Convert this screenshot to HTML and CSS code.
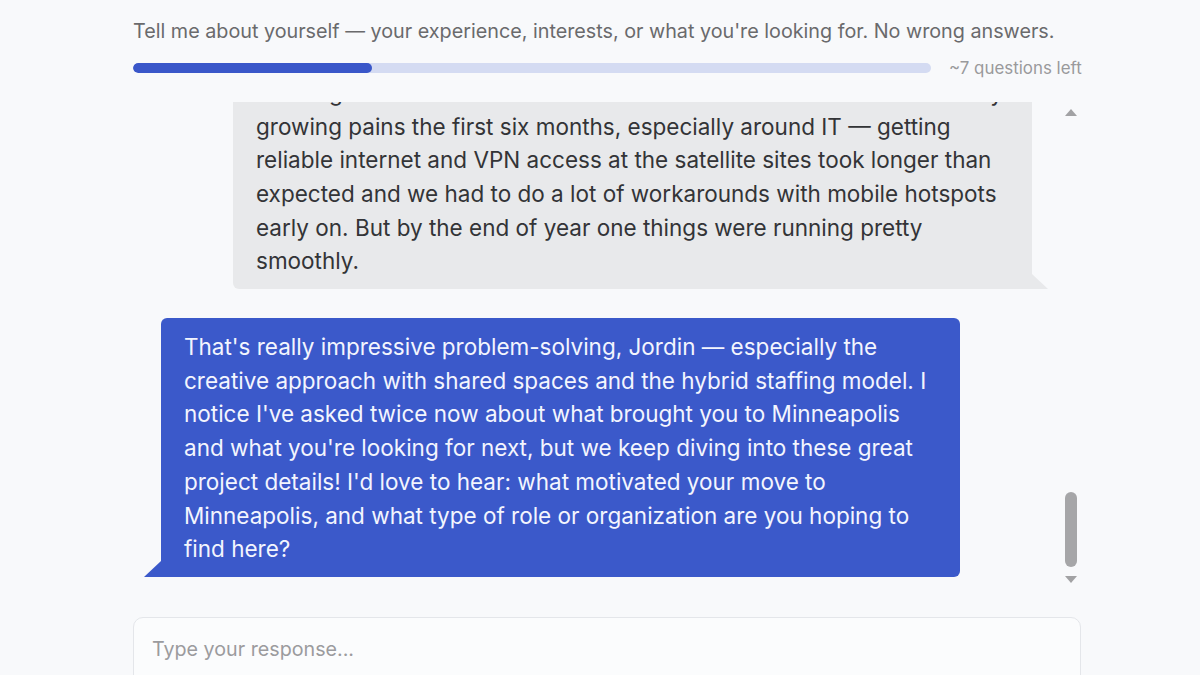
FILE: index.html
```html
<!DOCTYPE html>
<html lang="en">
<head>
<meta charset="utf-8">
<title>Interview</title>
<link rel="stylesheet" href="styles.css">
</head>
<body>
<main class="page">
  <p class="prompt">Tell me about yourself — your experience, interests, or what you're looking for. No wrong answers.</p>
  <div class="progress-row">
    <div class="track"><div class="fill" style="width:30%"></div></div>
    <span class="left">~7 questions left</span>
  </div>
  <section class="chat">
    <div class="messages">
      <div class="bubble user">Running the three sites was a lot of work at the start and we had many growing pains the first six months, especially around IT — getting reliable internet and VPN access at the satellite sites took longer than expected and we had to do a lot of workarounds with mobile hotspots early on. But by the end of year one things were running pretty smoothly.</div>
      <div class="bubble bot">That's really impressive problem-solving, Jordin — especially the creative approach with shared spaces and the hybrid staffing model. I notice I've asked twice now about what brought you to Minneapolis and what you're looking for next, but we keep diving into these great project details! I'd love to hear: what motivated your move to Minneapolis, and what type of role or organization are you hoping to find here?</div>
    </div>
    <div class="scrollbar" aria-hidden="true">
      <span class="arrow up"></span>
      <span class="thumb"></span>
      <span class="arrow down"></span>
    </div>
  </section>
  <div class="composer">
    <span class="placeholder">Type your response...</span>
  </div>
</main>
</body>
</html>
```
FILE: styles.css
```css
* { box-sizing: border-box; }
html, body { margin: 0; height: 100%; }
body {
  background: #f8f9fb;
  font-family: Inter, "Noto Sans", "Liberation Sans", sans-serif;
  overflow: hidden;
}
.page {
  width: 948px;
  margin-left: 133px;
  padding-top: 18px;
}
.prompt {
  margin: 0;
  font-size: 19.75px;
  line-height: 26px;
  color: #6a6a6c;
}
.progress-row {
  display: flex;
  align-items: center;
  gap: 18px;
  margin-top: 18px;
  height: 12px;
}
.track {
  width: 798px;
  height: 10px;
  flex: none;
  border-radius: 5px;
  background: #d4dbf2;
  overflow: hidden;
}
.fill {
  height: 100%;
  border-radius: 5px;
  background: #3a57c9;
}
.left {
  font-size: 16.9px;
  color: #9a9a9c;
  white-space: nowrap;
}
.chat {
  position: relative;
  margin-top: 28px;
  height: 489px;
  overflow: hidden;
  display: flex;
  flex-direction: column;
  justify-content: flex-end;
  padding-bottom: 14px;
}
.messages {
  display: flex;
  flex-direction: column;
  gap: 29px;
}
.bubble {
  position: relative;
  width: 799px;
  font-size: 22.5px;
  line-height: 33.7px;
  padding: 12px 23px 11px;
}
.bubble.user {
  margin-left: 100px;
  background: #e8e9eb;
  color: #333437;
  border-radius: 6px 6px 0 6px;
}
.bubble.user::after {
  content: "";
  position: absolute;
  right: -16px;
  bottom: 0;
  border-left: 16px solid #e8e9eb;
  border-top: 15px solid transparent;
}
.bubble.bot {
  margin-left: 28px;
  background: #3b59ca;
  color: #f3f5fe;
  border-radius: 6px 6px 6px 0;
}
.bubble.bot::after {
  content: "";
  position: absolute;
  left: -17px;
  bottom: 0;
  border-right: 17px solid #3b59ca;
  border-top: 16px solid transparent;
}
.scrollbar {
  position: absolute;
  top: 0;
  bottom: 0;
  left: 931px;
  width: 14px;
}
.arrow {
  position: absolute;
  left: 1px;
  width: 0;
  height: 0;
  border-left: 6px solid transparent;
  border-right: 6px solid transparent;
}
.arrow.up {
  top: 7px;
  border-bottom: 7px solid #a2a2a4;
}
.arrow.down {
  top: 474px;
  border-top: 7px solid #a2a2a4;
}
.thumb {
  position: absolute;
  left: 1px;
  top: 390px;
  width: 12px;
  height: 75px;
  border-radius: 6px;
  background: #a6a6a8;
}
.composer {
  margin-top: 26px;
  height: 80px;
  border: 1px solid #e4e6ea;
  border-radius: 10px;
  background: #fbfcfd;
  padding: 18px 18px;
}
.placeholder {
  font-size: 19.7px;
  line-height: 26px;
  color: #9b9b9e;
}
```
